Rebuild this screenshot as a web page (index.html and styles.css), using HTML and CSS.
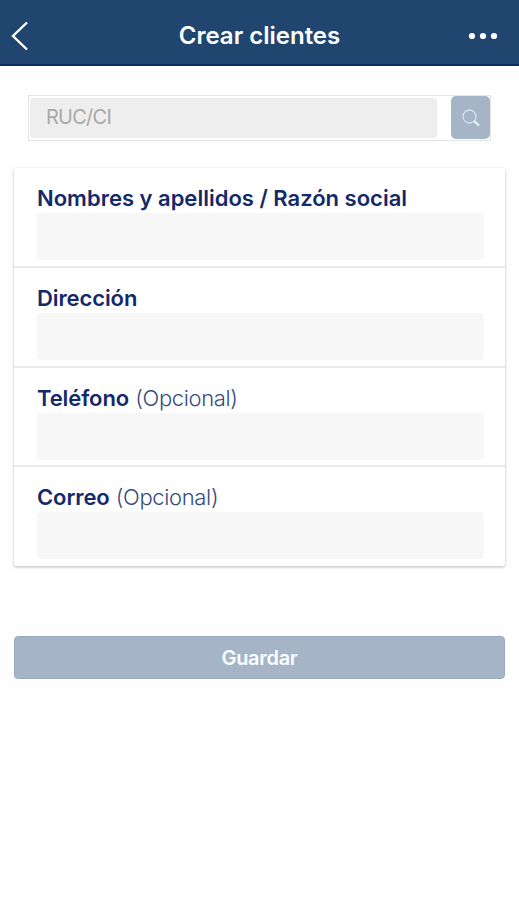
FILE: index.html
```html
<!DOCTYPE html>
<html lang="es">
<head>
<meta charset="utf-8">
<title>Crear clientes</title>
<link rel="stylesheet" href="styles.css">
</head>
<body>
<header class="bar">
  <svg class="back" width="20" height="30" viewBox="0 0 20 30"><path d="M17 1.5 3 15 17 28.5"/></svg>
  <h1>Crear clientes</h1>
  <svg class="more" width="30" height="8" viewBox="0 0 30 8"><circle cx="4" cy="4" r="3.1"/><circle cx="15" cy="4" r="3.1"/><circle cx="26" cy="4" r="3.1"/></svg>
</header>
<main>
  <div class="search">
    <div class="query">RUC/CI</div>
    <button class="find" aria-label="Buscar"><svg width="18" height="18" viewBox="0 0 18 18"><circle cx="7.5" cy="7.5" r="6.5"/><path d="m12 12 5 4.5"/></svg></button>
  </div>
  <form class="card">
    <div class="row"><label><b>Nombres y apellidos / Razón social</b></label><div class="field"></div></div>
    <div class="row"><label><b>Dirección</b></label><div class="field"></div></div>
    <div class="row"><label><b>Teléfono</b> <span>(Opcional)</span></label><div class="field"></div></div>
    <div class="row"><label><b>Correo</b> <span>(Opcional)</span></label><div class="field"></div></div>
  </form>
  <button class="save">Guardar</button>
</main>
</body>
</html>
```
FILE: styles.css
```css
* { box-sizing: border-box; }
body {
  margin: 0;
  min-height: 900px;
  background: #fefefe;
  font-family: Inter, "Liberation Sans", sans-serif;
}
button { border: 0; padding: 0; font-family: inherit; }
.bar {
  display: grid;
  grid-template-columns: 60px 1fr 60px;
  align-items: center;
  height: 66px;
  padding: 8px 0 0;
  background: #20466f;
  border-bottom: 2px solid #0c2d63;
}
.back { margin-left: 10px; fill: none; stroke: #fff; stroke-width: 2.4; }
.more { margin-left: 9px; fill: #fff; }
h1 {
  margin: 0;
  text-align: center;
  color: #fff;
  font-size: 24px;
  line-height: 30px;
  font-weight: 600;
}
main { padding: 29px 14px 0; }
.search {
  display: flex;
  justify-content: space-between;
  height: 46px;
  margin: 0 14px;
  width: 463px;
  padding: 1px 0 1px 1px;
  border: 1px solid #e4e4e4;
  background: #fff;
}
.query {
  width: 407px;
  height: 40px;
  margin-top: 1px;
  padding-left: 16px;
  border-radius: 3px;
  background: #eee;
  color: #a9a9a9;
  font-size: 20px;
  letter-spacing: -0.75px;
  line-height: 38px;
}
.find {
  display: grid;
  place-items: center;
  width: 39px;
  height: 43px;
  margin-top: -1px;
  border-radius: 5px;
  background: #a5b4c7;
}
.find svg { fill: none; stroke: #d6e3ee; stroke-width: 1.3; }
.find path { stroke: #f2f8fc; stroke-width: 2; }
.card {
  width: 491px;
  height: 398px;
  margin-top: 27px;
  border-radius: 2px;
  background: #fff;
  box-shadow: 0 1px 3px rgba(0, 0, 0, .28);
}
.row {
  height: 99.8px;
  padding: 16px 21px 0 23px;
  border-bottom: 2px solid #e9e9e9;
}
.row:last-child { border-bottom: 0; }
label {
  display: block;
  height: 29px;
  color: #14296a;
  font-size: 22px;
  line-height: 29px;
  white-space: nowrap;
}
label b { font-weight: 600; }
.row:nth-child(n+2) b { letter-spacing: -0.1px; }
label span { color: #364d7c; font-weight: 350; letter-spacing: -0.35px; }
.field { height: 47px; border-radius: 4px; background: #f7f7f7; }
.save {
  display: block;
  width: 491px;
  height: 43px;
  margin-top: 70px;
  border-radius: 4px;
  background: #a5b4c7;
  border: 1px solid #9aaabe;
  color: #fafdff;
  font-size: 20px;
  font-weight: 600;
  letter-spacing: -0.3px;
}
```
